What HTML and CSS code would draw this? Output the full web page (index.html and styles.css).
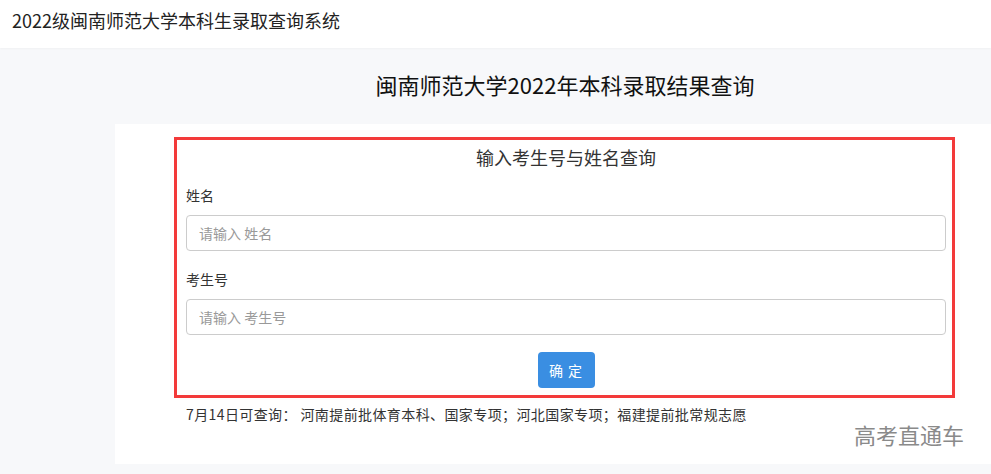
FILE: index.html
```html
<!DOCTYPE html>
<html lang="zh-CN">
<head>
  <meta charset="UTF-8" />
  <meta name="viewport" content="width=device-width, initial-scale=1.0"/>
  <title>2022级闽南师范大学本科生录取查询系统</title>
  <link rel="stylesheet" href="styles.css">
</head>
<body>

  <!-- Top bar -->
  <div class="topbar">2022级闽南师范大学本科生录取查询系统</div>

  <div class="page">
    <h1 class="page-title">闽南师范大学2022年本科录取结果查询</h1>

    <div class="card">
      <!-- Query form -->
      <div class="query-box">
        <h2>输入考生号与姓名查询</h2>
        <label for="name">姓名</label>
        <input type="text" id="name" placeholder="请输入 姓名">
        <label for="examNo">考生号</label>
        <input type="text" id="examNo" placeholder="请输入 考生号">
        <div class="actions">
          <button>确 定</button>
        </div>
      </div>

      <p class="note">7月14日可查询： 河南提前批体育本科、国家专项；河北国家专项；福建提前批常规志愿</p>

      <div class="watermark">高考直通车</div>
    </div>
  </div>

</body>
</html>
```

FILE: styles.css
```css
* {
  box-sizing: border-box;
  font-family: "Noto Sans CJK SC", "Noto Sans", sans-serif;
}

html, body {
  margin: 0;
  height: 100%;
  overflow: hidden;
}

body {
  background: #f7f8fa;
  color: #333;
  display: flex;
  flex-direction: column;
}

/* Header */
.topbar {
  height: 48px;
  background: #fff;
  padding: 8px 12px 0;
  font-size: 18px;
  line-height: 24px;
  color: #222;
  box-shadow: 0 1px 2px rgba(0,0,0,0.03);
}

/* Layout */
.page {
  flex: 1;
  display: flex;
  flex-direction: column;
  padding-left: 115px;
}

.page-title {
  width: 900px;
  margin: 0;
  padding: 22px 0 26px;
  font-size: 22px;
  line-height: 28px;
  font-weight: normal;
  text-align: center;
  color: #111;
}

.card {
  position: relative;
  background: #fff;
  height: 340px;
  padding-top: 13px;
}

.query-box {
  width: 781px;
  margin-left: 59px;
  border: 3px solid #f33a3a;
  padding: 4px 6px 7px 9px;
}

.query-box h2 {
  margin: 0 0 15px;
  font-size: 18px;
  line-height: 26px;
  font-weight: normal;
  text-align: center;
  color: #333;
}

label {
  display: block;
  font-size: 14px;
  line-height: 20px;
  margin-bottom: 10px;
  color: #333;
}

input {
  display: block;
  width: 760px;
  height: 36px;
  padding: 0 12px;
  margin-bottom: 18px;
  border: 1px solid #ccc;
  border-radius: 4px;
  font-size: 14px;
  color: #555;
}

input::placeholder {
  color: #999;
}

.actions {
  text-align: center;
  margin-top: -1px;
}

button {
  width: 57px;
  height: 36px;
  border: none;
  border-radius: 4px;
  background: #3a8ee2;
  color: #fff;
  font-size: 14px;
  letter-spacing: 1px;
  cursor: pointer;
}

.note {
  margin: 6px 0 0 71px;
  font-size: 14px;
  line-height: 20px;
  letter-spacing: 0.4px;
  color: #333;
}

.watermark {
  position: absolute;
  left: 739px;
  top: 296px;
  font-size: 22px;
  line-height: 28px;
  color: #8a8a8a;
}
```
